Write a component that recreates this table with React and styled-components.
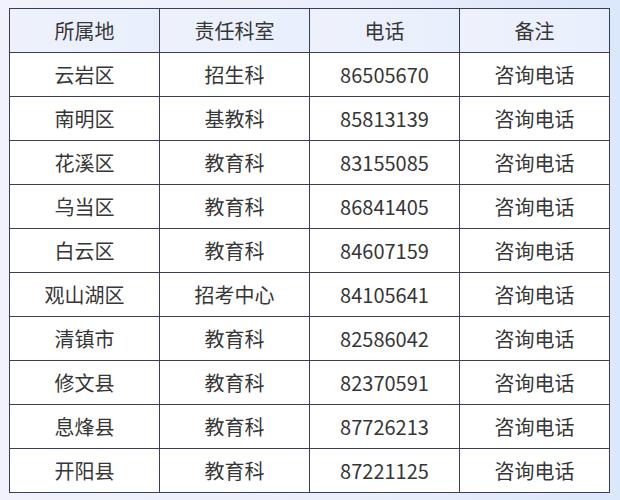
import React from "react";
import styled, { createGlobalStyle } from "styled-components";

const Global = createGlobalStyle`
  html, body { margin: 0; padding: 0; }
  body {
    width: 620px;
    height: 500px;
    background: linear-gradient(90deg, #f1f2fb 0%, #ebeffb 55%, #dbe7fb 100%);
    font-family: "Noto Sans CJK SC", "Noto Sans", sans-serif;
  }
`;

const Page = styled.div`
  padding: 8px 10px 0 9px;
`;

const Table = styled.table`
  border-collapse: collapse;
  width: 601px;
  table-layout: fixed;
  background: #ffffff;
  color: #363636;
  font-size: 20px;
`;

const Th = styled.th`
  height: 43px;
  padding: 0;
  font-weight: 400;
  text-align: center;
  border: 1px solid #3a3e58;
  background: linear-gradient(90deg, #eef1fc 0%, #e8effc 100%);
`;

const Td = styled.td`
  height: 43px;
  padding: 0;
  text-align: center;
  border: 1px solid #3a3e58;
`;

const rows = [
  ["云岩区", "招生科", "86505670"],
  ["南明区", "基教科", "85813139"],
  ["花溪区", "教育科", "83155085"],
  ["乌当区", "教育科", "86841405"],
  ["白云区", "教育科", "84607159"],
  ["观山湖区", "招考中心", "84105641"],
  ["清镇市", "教育科", "82586042"],
  ["修文县", "教育科", "82370591"],
  ["息烽县", "教育科", "87726213"],
  ["开阳县", "教育科", "87221125"],
];

export default function App() {
  return (
    <>
      <Global />
      <Page>
        <Table>
          <thead>
            <tr>
              <Th>所属地</Th>
              <Th>责任科室</Th>
              <Th>电话</Th>
              <Th>备注</Th>
            </tr>
          </thead>
          <tbody>
            {rows.map((r) => (
              <tr key={r[0]}>
                <Td>{r[0]}</Td>
                <Td>{r[1]}</Td>
                <Td>{r[2]}</Td>
                <Td>咨询电话</Td>
              </tr>
            ))}
          </tbody>
        </Table>
      </Page>
    </>
  );
}
